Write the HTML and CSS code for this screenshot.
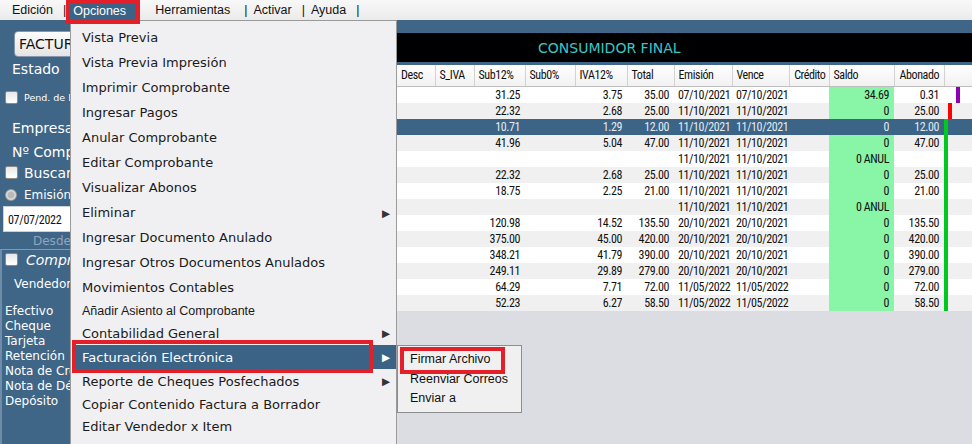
FILE: index.html
```html
<!DOCTYPE html>
<html>
<head>
<meta charset="utf-8">
<link rel="stylesheet" href="styles.css">
</head>
<body>

<div class="menubar">
    <span class="mi">Edición</span><span class="sep">|</span>
    <span class="mi open">Opciones</span>
    <span class="mi herr">Herramientas</span><span class="sep">|</span>
    <span class="mi">Activar</span><span class="sep">|</span>
    <span class="mi">Ayuda</span><span class="sep">|</span>
</div>

<div class="workspace">

    <div class="side">
        <div class="panel">
            <div class="doc-btn">FACTURA</div>
            <div class="row lbl r-estado">Estado</div>
            <div class="row r-pend"><span class="chk"></span><span class="tiny">Pend. de E</span></div>
            <div class="row lbl r-emp">Empresa</div>
            <div class="row lbl r-num">Nº Compr</div>
            <div class="row r-buscar"><span class="chk"></span><span class="lbl">Buscar</span></div>
            <div class="row r-emi"><span class="radio"></span><span class="small">Emisión</span></div>
            <div class="date-field">07/07/2022</div>
            <div class="row desde">Desde</div>
            <div class="group">
                <div class="row r-comp"><span class="chk"></span><span class="lbl it">Compro</span></div>
                <div class="row r-vend"><span class="small">Vendedor</span><span class="input"></span></div>
                <ul class="pagos">
                    <li>Efectivo</li>
                    <li>Cheque</li>
                    <li>Tarjeta</li>
                    <li>Retención</li>
                    <li>Nota de Cre</li>
                    <li>Nota de Dé</li>
                    <li>Depósito</li>
                </ul>
            </div>
        </div>
    </div>

    <div class="grid">
        <div class="client">CONSUMIDOR FINAL</div>
        <table class="docs">
            <colgroup>
                <col style="width:38px"><col style="width:39px"><col style="width:51px">
                <col style="width:50px"><col style="width:52px"><col style="width:47px">
                <col style="width:58px"><col style="width:57px"><col style="width:40px">
                <col style="width:65px"><col style="width:50px"><col style="width:28px">
            </colgroup>
            <thead>
                <tr>
                    <th>Desc</th><th>S_IVA</th><th>Sub12%</th><th>Sub0%</th><th>IVA12%</th><th>Total</th>
                    <th>Emisión</th><th>Vence</th><th class="r">Crédito</th><th>Saldo</th><th class="c">Abonado</th><th></th>
                </tr>
            </thead>
            <tbody>
                <tr><td></td><td></td><td class="n">31.25</td><td></td><td class="n">3.75</td><td class="n">35.00</td><td class="d">07/10/2021</td><td class="d">07/10/2021</td><td></td><td class="saldo">34.69</td><td class="n">0.31</td><td class="flag"><div class="bar purple"></div></td></tr>
                <tr><td></td><td></td><td class="n">22.32</td><td></td><td class="n">2.68</td><td class="n">25.00</td><td class="d">11/10/2021</td><td class="d">11/10/2021</td><td></td><td class="saldo">0</td><td class="n">25.00</td><td class="flag"><div class="bar red"></div></td></tr>
                <tr class="sel"><td></td><td></td><td class="n">10.71</td><td></td><td class="n">1.29</td><td class="n">12.00</td><td class="d">11/10/2021</td><td class="d">11/10/2021</td><td></td><td class="saldo">0</td><td class="n">12.00</td><td class="flag"><div class="bar green"></div></td></tr>
                <tr><td></td><td></td><td class="n">41.96</td><td></td><td class="n">5.04</td><td class="n">47.00</td><td class="d">11/10/2021</td><td class="d">11/10/2021</td><td></td><td class="saldo">0</td><td class="n">47.00</td><td class="flag"><div class="bar green"></div></td></tr>
                <tr><td></td><td></td><td></td><td></td><td></td><td></td><td class="d">11/10/2021</td><td class="d">11/10/2021</td><td></td><td class="saldo">0 ANUL</td><td></td><td class="flag"><div class="bar green"></div></td></tr>
                <tr><td></td><td></td><td class="n">22.32</td><td></td><td class="n">2.68</td><td class="n">25.00</td><td class="d">11/10/2021</td><td class="d">11/10/2021</td><td></td><td class="saldo">0</td><td class="n">25.00</td><td class="flag"><div class="bar green"></div></td></tr>
                <tr><td></td><td></td><td class="n">18.75</td><td></td><td class="n">2.25</td><td class="n">21.00</td><td class="d">11/10/2021</td><td class="d">11/10/2021</td><td></td><td class="saldo">0</td><td class="n">21.00</td><td class="flag"><div class="bar green"></div></td></tr>
                <tr><td></td><td></td><td></td><td></td><td></td><td></td><td class="d">11/10/2021</td><td class="d">11/10/2021</td><td></td><td class="saldo">0 ANUL</td><td></td><td class="flag"><div class="bar green"></div></td></tr>
                <tr><td></td><td></td><td class="n">120.98</td><td></td><td class="n">14.52</td><td class="n">135.50</td><td class="d">20/10/2021</td><td class="d">20/10/2021</td><td></td><td class="saldo">0</td><td class="n">135.50</td><td class="flag"><div class="bar green"></div></td></tr>
                <tr><td></td><td></td><td class="n">375.00</td><td></td><td class="n">45.00</td><td class="n">420.00</td><td class="d">20/10/2021</td><td class="d">20/10/2021</td><td></td><td class="saldo">0</td><td class="n">420.00</td><td class="flag"><div class="bar green"></div></td></tr>
                <tr><td></td><td></td><td class="n">348.21</td><td></td><td class="n">41.79</td><td class="n">390.00</td><td class="d">20/10/2021</td><td class="d">20/10/2021</td><td></td><td class="saldo">0</td><td class="n">390.00</td><td class="flag"><div class="bar green"></div></td></tr>
                <tr><td></td><td></td><td class="n">249.11</td><td></td><td class="n">29.89</td><td class="n">279.00</td><td class="d">20/10/2021</td><td class="d">20/10/2021</td><td></td><td class="saldo">0</td><td class="n">279.00</td><td class="flag"><div class="bar green"></div></td></tr>
                <tr><td></td><td></td><td class="n">64.29</td><td></td><td class="n">7.71</td><td class="n">72.00</td><td class="d">11/05/2022</td><td class="d">11/05/2022</td><td></td><td class="saldo">0</td><td class="n">72.00</td><td class="flag"><div class="bar green"></div></td></tr>
                <tr><td></td><td></td><td class="n">52.23</td><td></td><td class="n">6.27</td><td class="n">58.50</td><td class="d">11/05/2022</td><td class="d">11/05/2022</td><td></td><td class="saldo">0</td><td class="n">58.50</td><td class="flag"><div class="bar green"></div></td></tr>
            </tbody>
        </table>
        <div class="empty"></div>
    </div>

    <!-- Opciones dropdown -->
    <div class="dropdown">
        <div class="item">Vista Previa</div>
        <div class="item">Vista Previa Impresión</div>
        <div class="item">Imprimir Comprobante</div>
        <div class="item">Ingresar Pagos</div>
        <div class="item">Anular Comprobante</div>
        <div class="item">Editar Comprobante</div>
        <div class="item">Visualizar Abonos</div>
        <div class="item">Eliminar<span class="arrow">&#9654;</span></div>
        <div class="item">Ingresar Documento Anulado</div>
        <div class="item">Ingresar Otros Documentos Anulados</div>
        <div class="item">Movimientos Contables</div>
        <div class="item plain h21">Añadir Asiento al Comprobante</div>
        <div class="item h24">Contabilidad General<span class="arrow">&#9654;</span></div>
        <div class="item h24 active">Facturación Electrónica<span class="arrow">&#9654;</span></div>
        <div class="item h24">Reporte de Cheques Posfechados<span class="arrow">&#9654;</span></div>
        <div class="item h22">Copiar Contenido Factura a Borrador</div>
        <div class="item h23">Editar Vendedor x Item</div>
        <div class="item">Nuevo Formato Venta</div>
        <div class="mark mark-fe"></div>
    </div>

    <div class="submenu">
        <div class="sub-item">Firmar Archivo</div>
        <div class="sub-item">Reenviar Correos</div>
        <div class="sub-item">Enviar a</div>
        <div class="mark mark-firmar"></div>
    </div>

</div>

</body>
</html>
```

FILE: styles.css
```css
* {
    box-sizing: border-box;
}

body {
    margin: 0;
    width: 972px;
    height: 444px;
    overflow: hidden;
    background: #3f6587;
    font-family: "DejaVu Sans", sans-serif;
}

/* ---------- menu bar ---------- */
.menubar {
    height: 20px;
    display: flex;
    align-items: flex-start;
    background: linear-gradient(#f8f8f8, #ebebeb);
    font-family: "Liberation Sans", Arial, sans-serif;
    font-size: 12.5px;
    color: #111;
    padding-left: 12px;
    position: relative;
    z-index: 3;
}

.mi, .sep {
    line-height: 20px;
}

.sep {
    margin: 0 6px 0 10px;
}

.mi.open {
    height: 24px;
    width: 74px;
    margin-left: -6px;
    border: 4px solid #e3202a;
    background: #3b6386;
    color: #fff;
    line-height: 15px;
    padding-left: 3px;
}

.mi.herr {
    margin-left: 15px;
    margin-right: 4px;
}

/* ---------- workspace ---------- */
.workspace {
    position: relative;
    display: flex;
    height: 424px;
}

.side {
    width: 397px;
    flex: none;
    color: #fff;
    padding-top: 11px;
}

.panel {
    width: 70px;
    overflow: hidden;
}

.doc-btn {
    margin-left: 14px;
    width: 150px;
    height: 26px;
    border: 1px solid #8797ab;
    border-radius: 4px;
    background: linear-gradient(#fdfdfd, #e4e4e4);
    color: #111;
    font-size: 14px;
    line-height: 24px;
    padding-left: 4px;
}

.row {
    display: flex;
    align-items: center;
    white-space: nowrap;
}

.lbl {
    font-size: 14px;
}

.panel > .lbl {
    padding-left: 12px;
}

.r-estado { height: 24px; }
.r-pend { height: 33px; padding-left: 5px; }
.r-emp { height: 28px; }
.r-num { height: 20px; }
.r-buscar { height: 21px; padding-left: 5px; }
.r-emi { height: 23px; padding-left: 5px; }

.chk {
    width: 13px;
    height: 13px;
    border: 1px solid #8a8a8a;
    border-radius: 2px;
    background: linear-gradient(#e8e8e8, #ffffff);
    margin-right: 6px;
    flex: none;
}

.radio {
    width: 12px;
    height: 12px;
    border-radius: 50%;
    background: radial-gradient(circle, #b9b9b9 0 3px, #dcdcdc 4px);
    border: 1px solid #9a9a9a;
    margin-right: 7px;
    flex: none;
}

.tiny {
    font-size: 9.5px;
}

.small {
    font-size: 12px;
}

.it {
    font-style: italic;
}

.date-field {
    margin-left: 3px;
    width: 200px;
    height: 26px;
    background: #fff;
    color: #111;
    font-family: "Roboto Condensed", "Liberation Sans", sans-serif;
    font-size: 12px;
    letter-spacing: -0.3px;
    line-height: 26px;
    padding-left: 4px;
    border: 1px solid #c9d2dc;
}

.desde {
    height: 17px;
    padding-left: 33px;
    font-size: 12px;
    color: #8ea6bf;
}

.group {
    border-top: 1px solid #7f9ab6;
    border-left: 2px solid #6f8cab;
    height: 200px;
}

.r-comp {
    height: 19px;
    padding-left: 3px;
}

.r-comp .chk {
    margin-right: 8px;
}

.r-vend {
    height: 29px;
    padding-left: 12px;
}

.input {
    margin-left: 6px;
    width: 120px;
    height: 18px;
    background: #fff;
}

.pagos {
    list-style: none;
    margin: 6px 0 0;
    padding: 0 0 0 3px;
    font-size: 12px;
    line-height: 15px;
    white-space: nowrap;
}

/* ---------- documents grid ---------- */
.grid {
    flex: 1;
    padding-top: 13px;
    display: flex;
    flex-direction: column;
}

.client {
    height: 29px;
    background: #000;
    color: #3cc6c8;
    font-size: 14px;
    line-height: 30px;
    padding-left: 141px;
    margin-bottom: 3px;
}

.docs {
    width: 575px;
    table-layout: fixed;
    border-collapse: collapse;
    font-family: "Roboto Condensed", "Liberation Sans", sans-serif;
    font-size: 12px;
    letter-spacing: -0.4px;
    color: #111;
}

.docs th {
    height: 21px;
    background: linear-gradient(#ffffff, #f1f1f1);
    border-right: 1px solid #d2d2d2;
    border-bottom: 1px solid #bdbdbd;
    font-weight: normal;
    text-align: left;
    padding: 0 0 0 4px;
    white-space: nowrap;
    overflow: hidden;
}

.docs th.r {
    text-align: right;
    padding: 0 3px 0 0;
}

.docs th.c {
    padding-left: 5px;
}

.docs td {
    height: 16px;
    padding: 0 5px 0 0;
    line-height: 16px;
    white-space: nowrap;
    overflow: hidden;
    background: #fff;
}

.docs tbody tr:nth-child(even) td {
    background: #f0f0f0;
}

.docs td.n {
    text-align: right;
}

.docs td.d {
    padding: 0 0 0 4px;
}

.docs td.saldo,
.docs tbody tr:nth-child(even) td.saldo {
    background: #89f6a7;
    text-align: right;
    color: #111;
}

.docs tr.sel td {
    background: #3b6487;
    color: #e3eaf1;
}

.docs td.flag {
    padding: 0;
}

.bar {
    height: 16px;
    width: 4px;
}

.bar.purple { background: #8d00b4; margin-left: 12px; }
.bar.red { background: #ff0000; margin-left: 4px; }
.bar.green { background: #00c81e; margin-left: 0; }

.empty {
    flex: 1;
    background: #dcdde2;
}

/* ---------- dropdown menu ---------- */
.dropdown {
    position: absolute;
    left: 70px;
    top: 0;
    width: 327px;
    height: 440px;
    background: #f0f0f3;
    border: 1px solid #9a9a9a;
    padding-top: 4px;
    z-index: 2;
    color: #1a1a1a;
    font-size: 13px;
}

.item {
    height: 25px;
    display: flex;
    align-items: center;
    padding-left: 11px;
    white-space: nowrap;
}

.item.plain {
    font-family: "Liberation Sans", Arial, sans-serif;
    font-size: 12.5px;
}

.item.h21 { height: 21px; }
.item.h22 { height: 22px; }
.item.h23 { height: 23px; }
.item.h24 { height: 24px; }

.item.active {
    background: #3b6386;
    color: #fff;
    margin: 0 0 0 2px;
    padding-left: 9px;
}

.arrow {
    margin-left: auto;
    margin-right: 6px;
    font-size: 10.5px;
    color: #333;
}

.item.active .arrow {
    color: #fff;
}

.mark {
    position: absolute;
    border: 4px solid #e3202a;
}

.mark-fe {
    left: 1px;
    top: 319px;
    width: 301px;
    height: 33px;
}

/* ---------- submenu ---------- */
.submenu {
    position: absolute;
    left: 397px;
    top: 325px;
    width: 125px;
    height: 68px;
    background: #f0f0f0;
    border: 1px solid #8e8e8e;
    padding-top: 4px;
    z-index: 2;
    font-family: "Liberation Sans", Arial, sans-serif;
    font-size: 12.5px;
    color: #111;
}

.sub-item {
    height: 19.5px;
    line-height: 19.5px;
    padding-left: 12px;
    white-space: nowrap;
}

.mark-firmar {
    left: 2px;
    top: 1px;
    width: 105px;
    height: 27px;
}
```
